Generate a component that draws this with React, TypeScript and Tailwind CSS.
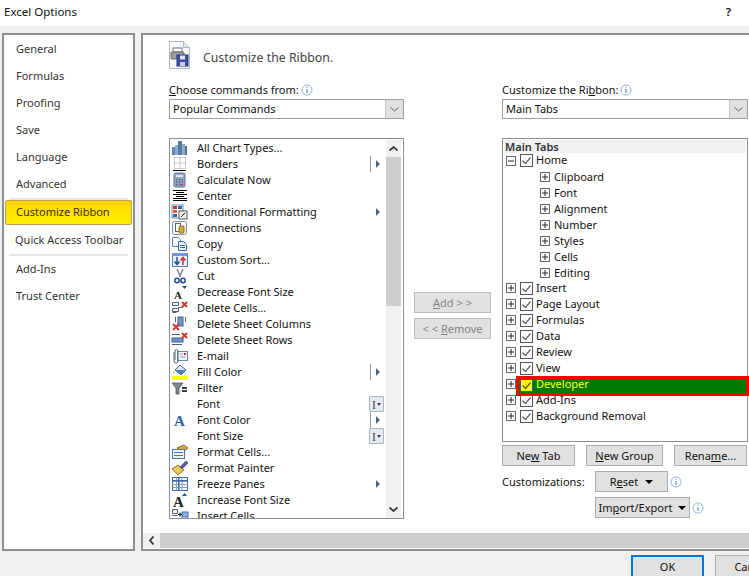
import type { ReactNode } from "react";

/* ── Small glyphs ─────────────────────────────────────────── */

function Info() {
  return (
    <svg width="12" height="12" viewBox="0 0 12 12" className="shrink-0">
      <circle cx="6" cy="6" r="5" fill="#fff" stroke="#8fb4de" />
      <rect x="5.5" y="2.8" width="1" height="1" fill="#3f7fc4" />
      <rect x="5.5" y="5" width="1" height="4" fill="#3f7fc4" />
    </svg>
  );
}

function Chevron({ bold }: { bold?: boolean }) {
  return (
    <svg width="9" height="5" viewBox="0 0 9 5">
      <path d="M.5.5l4 3.5 4-3.5" fill="none" stroke={bold ? "#333" : "#555"} strokeWidth={bold ? 1.7 : 1} />
    </svg>
  );
}

function Caret() {
  return <span className="border-x-[4px] border-t-[4px] border-x-transparent border-t-black" />;
}

function Toggle({ open }: { open?: boolean }) {
  return (
    <svg width="10" height="10" viewBox="0 0 10 10" className="shrink-0">
      <rect x=".5" y=".5" width="9" height="9" fill="#fff" stroke="#666" />
      <path d={open ? "M2 5h6" : "M2 5h6M5 2v6"} stroke="#222" />
    </svg>
  );
}

function Check({ yellow }: { yellow?: boolean }) {
  return (
    <svg width="13" height="13" viewBox="0 0 13 13" className="shrink-0">
      <rect x=".5" y=".5" width="12" height="12" fill={yellow ? "#ffff00" : "#fff"} stroke={yellow ? "#1f5fb0" : "#555"} />
      <path d="M2.5 6.5l3 3 5-6" fill="none" stroke={yellow ? "#555500" : "#666"} strokeWidth="1.2" />
    </svg>
  );
}

/* ── Command icons ────────────────────────────────────────── */

const REDX = "M10 1l5 5M15 1l-5 5";

const ICONS: Record<string, ReactNode> = {
  chart: (
    <>
      <rect x="1" y="7" width="3" height="8" fill="#5f84ad" />
      <rect x="4" y="5" width="4" height="10" fill="#8fabcb" />
      <rect x="7" y="1" width="4" height="14" fill="#55789f" />
      <rect x="11" y="4" width="3" height="11" fill="#8fabcb" />
      <rect x="14" y="6" width="2" height="9" fill="#4f7196" />
    </>
  ),
  borders: (
    <>
      <path d="M3.500 1.500h11v11h-11zM9 1.500v11M3.500 7h11" fill="none" stroke="#999" strokeDasharray="1 1" />
      <rect x="2" y="14" width="13" height="1" fill="#000" />
    </>
  ),
  calc: (
    <>
      <rect x="3" y="1" width="11" height="14" rx="1.500" fill="#8ea6c9" stroke="#64799b" />
      <rect x="5" y="3" width="7" height="2" fill="#dfe8f4" />
      <path d="M5 7.500h7M5 10h7M5 12.500h7" stroke="#5a5f7d" strokeDasharray="1.500 1.500" strokeWidth="1.500" />
      <rect x="10" y="12" width="2" height="1.500" fill="#c53b3b" />
    </>
  ),
  center: <path d="M2 2.500h14M5 4.500h8M2 6.500h14M5 8.500h8M2 10.500h14M2 12.500h14" stroke="#000" />,
  cond: (
    <>
      <rect x="1" y="1" width="11" height="13" fill="#fff" stroke="#6f8fb5" />
      <rect x="2" y="2" width="4" height="3" fill="#c9372c" />
      <rect x="7" y="2" width="4" height="3" fill="#3c66a5" />
      <rect x="2" y="6" width="4" height="3" fill="#d9603f" />
      <rect x="2" y="10" width="4" height="3" fill="#3c66a5" />
      <rect x="8" y="7" width="8" height="8" fill="#edf0f4" stroke="#555" />
      <path d="M10 13l4-4" stroke="#222" />
    </>
  ),
  conn: (
    <>
      <rect x="1.500" y="1.500" width="14" height="13" rx="2" fill="#f3f5f8" stroke="#7d8ea3" />
      <rect x="4.500" y="3.500" width="5" height="8" fill="#fff" stroke="#567" />
      <rect x="8" y="6" width="5" height="7" rx="1" fill="#d6a93c" stroke="#8f6d1a" />
    </>
  ),
  copy: (
    <>
      <path d="M1.500 1.500h6l2 2v7h-8z" fill="#fff" stroke="#5d82b8" />
      <path d="M7.500 5.500h5l3 3v6h-8z" fill="#e9f0f9" stroke="#3e69a8" />
      <path d="M9 9.500h5M9 11.500h5" stroke="#3e69a8" />
    </>
  ),
  sort: (
    <>
      <rect x="1.500" y="1.500" width="15" height="13" fill="#e8f0fa" stroke="#4e7fbd" />
      <rect x="1" y="1" width="16" height="3" fill="#6d9ad1" />
      <path d="M6 5v7M3.500 9.500L6 12.500l2.500-3" fill="none" stroke="#1f4f9c" strokeWidth="1.500" />
      <path d="M12 13V6M9.500 8.500L12 5.500l2.500 3" fill="none" stroke="#c8352a" strokeWidth="1.500" />
    </>
  ),
  cut: (
    <>
      <path d="M6 1l3.500 8M12 1L8.500 9" stroke="#7d8794" strokeWidth="1.500" />
      <circle cx="6" cy="12.500" r="2.200" fill="#fff" stroke="#22439c" strokeWidth="1.500" />
      <circle cx="12" cy="12.500" r="2.200" fill="#fff" stroke="#22439c" strokeWidth="1.500" />
    </>
  ),
  dec: (
    <>
      <text x="3" y="15" fontFamily="Liberation Serif, serif" fontWeight="700" fontSize="11" fill="#222">A</text>
      <path d="M11 2h5l-2.500 3z" fill="#1f4f9c" />
    </>
  ),
  delCells: (
    <>
      <path d="M1.500 2.500h6v3h-6zM1.500 8.500h6v3h-6zM1.500 12.500h4" fill="#fff" stroke="#4b5f7c" />
      <path d="M7 7.500h5" stroke="#4b5f7c" />
      <path d={REDX} transform="translate(1 1)" stroke="#d8342a" strokeWidth="2" />
    </>
  ),
  delCols: (
    <>
      <path d="M4.500 1v5M14.500 1v5" stroke="#4b5f7c" />
      <rect x="7" y="1" width="5" height="9" fill="#6f96c7" stroke="#3e5f8e" />
      <path d="M2 8l6 6M8 8l-6 6" stroke="#d8342a" strokeWidth="2" />
    </>
  ),
  delRows: (
    <>
      <path d="M1 2.500h8M1 12.500h10" stroke="#4b5f7c" />
      <rect x="1" y="6" width="11" height="4" fill="#6f96c7" stroke="#3e5f8e" />
      <path d={REDX} transform="translate(1 0)" stroke="#d8342a" strokeWidth="2" />
    </>
  ),
  mail: (
    <>
      <rect x="6.500" y="3.500" width="10" height="9" fill="#f4f7fb" stroke="#6f86a5" />
      <path d="M9 6h3M9 9h5" stroke="#8596ad" />
      <rect x="13" y="5" width="2" height="2" fill="#c9372c" />
      <path d="M3 4v9a2 2 0 004 0V3a1.500 1.500 0 00-3 0v9" fill="none" stroke="#57687d" />
    </>
  ),
  fill: (
    <>
      <path d="M9 1l6 5-5 5-6-5z" fill="#dce6f2" stroke="#3f5f8c" />
      <path d="M4 6h10l-4 5z" fill="#4f7fc0" />
      <path d="M3 6.500q-1.500 3 0 3t0-3" fill="#f0c010" />
      <rect x="1" y="12" width="16" height="4" fill="#ffff00" />
    </>
  ),
  filter: (
    <>
      <path d="M1 3h11L8 8v6H5V8z" fill="#7b8794" stroke="#4a5561" strokeWidth=".8" />
      <path d="M11 8h5M11 11h5" stroke="#000" strokeWidth="1.500" />
    </>
  ),
  fontColor: (
    <text x="3" y="14" fontFamily="Liberation Serif, serif" fontWeight="700" fontSize="15" fill="#2d5fa8">A</text>
  ),
  formatCells: (
    <>
      <path d="M6 4l7-3 4 3-5 4z" fill="#d1a94a" stroke="#8b6a1e" />
      <rect x="1.500" y="5.500" width="12" height="9" fill="#eef3f9" stroke="#4c74a8" />
      <path d="M3 8.500h9M3 11.500h9" stroke="#4c74a8" />
    </>
  ),
  painter: (
    <>
      <path d="M1 9l6-4 6 5-6 5z" fill="#ecc85a" stroke="#97772a" />
      <path d="M9 7l6-6 2 2-6 6z" fill="#5b56a8" stroke="#3e3a82" strokeWidth=".6" />
    </>
  ),
  freeze: (
    <>
      <rect x="1.500" y="1.500" width="15" height="13" fill="#fff" stroke="#3e69a8" />
      <path d="M1.500 5h15M1.500 8.500h15M1.500 11.500h15M5.500 1.500v13M11 1.500v13" stroke="#7fa0cb" />
      <rect x="1" y="4" width="16" height="1.500" fill="#3e69a8" />
      <rect x="7" y="1" width="1.500" height="14" fill="#3e69a8" />
    </>
  ),
  inc: (
    <>
      <text x="2" y="15" fontFamily="Liberation Serif, serif" fontWeight="700" fontSize="15" fill="#222">A</text>
      <path d="M11 4h5l-2.500-3z" fill="#1f4f9c" />
    </>
  ),
  insert: (
    <>
      <path d="M1.500 1.500h5v4h-5zM1.500 7.500h5" fill="#fff" stroke="#4b5f7c" />
      <path d="M7 6.500h4M9 4.500v4" stroke="#000" />
      <rect x="11" y="4" width="6" height="5" fill="#8fb4e0" stroke="#3e69a8" />
    </>
  ),
};

/* ── Data ─────────────────────────────────────────────────── */

type Side = "arrow" | "split" | "input";

const COMMANDS: { icon?: string; label: string; side?: Side }[] = [
  { icon: "chart", label: "All Chart Types..." },
  { icon: "borders", label: "Borders", side: "split" },
  { icon: "calc", label: "Calculate Now" },
  { icon: "center", label: "Center" },
  { icon: "cond", label: "Conditional Formatting", side: "arrow" },
  { icon: "conn", label: "Connections" },
  { icon: "copy", label: "Copy" },
  { icon: "sort", label: "Custom Sort..." },
  { icon: "cut", label: "Cut" },
  { icon: "dec", label: "Decrease Font Size" },
  { icon: "delCells", label: "Delete Cells..." },
  { icon: "delCols", label: "Delete Sheet Columns" },
  { icon: "delRows", label: "Delete Sheet Rows" },
  { icon: "mail", label: "E-mail" },
  { icon: "fill", label: "Fill Color", side: "split" },
  { icon: "filter", label: "Filter" },
  { label: "Font", side: "input" },
  { icon: "fontColor", label: "Font Color", side: "split" },
  { label: "Font Size", side: "input" },
  { icon: "formatCells", label: "Format Cells..." },
  { icon: "painter", label: "Format Painter" },
  { icon: "freeze", label: "Freeze Panes", side: "arrow" },
  { icon: "inc", label: "Increase Font Size" },
  { icon: "insert", label: "Insert Cells" },
];

const GROUPS = ["Clipboard", "Font", "Alignment", "Number", "Styles", "Cells", "Editing"];
const TABS_A = ["Insert", "Page Layout", "Formulas", "Data", "Review", "View"];
const TABS_B = ["Add-Ins", "Background Removal"];

/* ── Pieces ───────────────────────────────────────────────── */

function NavItem({ label, className = "" }: { label: string; className?: string }) {
  return <div className={`flex items-center ${className}`}>{label}</div>;
}

function SideMark({ side }: { side?: Side }) {
  if (!side) return null;
  if (side === "input") {
    return (
      <span className="ml-auto mr-[2px] flex h-[16px] w-[15px] items-center justify-center gap-[1px] rounded-[1px] border border-[#a9b6c6] bg-[#e6ebf1] text-[#555]">
        <span className="font-['Liberation_Serif',serif] text-[13px] leading-none">I</span>
        <span className="border-x-[2.5px] border-t-[3px] border-x-transparent border-t-[#444]" />
      </span>
    );
  }
  return (
    <span className="ml-auto flex h-[16px] w-[18px] items-center">
      <span className={`ml-[2px] h-[16px] w-px ${side === "split" ? "bg-[#9a9a9a]" : ""}`} />
      <span className="ml-[5px] border-y-[4px] border-l-[4px] border-y-transparent border-l-[#4d6488]" />
    </span>
  );
}

function Combo({ label }: { label: string }) {
  return (
    <div className="flex h-[20px] items-stretch border border-[#a0a0a0] bg-white pl-[3px]">
      <span className="flex-1 leading-[18px]">{label}</span>
      <span className="flex w-[18px] items-center justify-center border-l border-[#c4c4c4] bg-[#e1e1e1]">
        <Chevron />
      </span>
    </div>
  );
}

function Btn({ children, className = "" }: { children: ReactNode; className?: string }) {
  return (
    <div className={`flex h-[21px] items-center justify-center border border-[#adadad] bg-[#e1e1e1] pt-px ${className}`}>
      {children}
    </div>
  );
}

function TreeRow({ label, className = "" }: { label: string; className?: string }) {
  return (
    <div className={`flex h-[16px] items-center pl-[2px] ${className}`}>
      <Toggle />
      <span className="ml-[4px]"><Check /></span>
      <span className="ml-[3px]">{label}</span>
    </div>
  );
}

/* ── Dialog ───────────────────────────────────────────────── */

export default function App() {
  return (
    <div className="flex h-[576px] w-[749px] flex-col overflow-hidden bg-[#f0f0f0] font-['Noto_Sans',sans-serif] text-[11px] text-[#111]">
      {/* title bar */}
      <div className="flex h-[26px] shrink-0 items-start justify-between bg-white pl-[4px] pr-[18px] pt-[3px] text-[11.5px]">
        <span>Excel Options</span>
        <span className="font-semibold">?</span>
      </div>

      <div className="mt-[7px] flex h-[518px] shrink-0 gap-[6px] pl-[2px]">
        {/* category list */}
        <nav className="w-[133px] shrink-0 border-2 border-[#8b9096] bg-white pt-px text-[#333]">
          {["General", "Formulas", "Proofing", "Save", "Language", "Advanced"].map((n) => (
            <NavItem key={n} label={n} className="h-[27px] pl-[12px]" />
          ))}
          <div className="mx-[5px] h-[2px] bg-[#e6e6e6]" />
          <div className="mx-[1px] flex h-[25px] items-center rounded-[2px] border border-[#c2a14a] bg-gradient-to-b from-[#ffd400] to-[#fff000] pl-[10px] text-[#3b3000]">
            Customize Ribbon
          </div>
          <NavItem label="Quick Access Toolbar" className="mt-[2px] h-[27px] pl-[11px]" />
          <div className="mx-[5px] h-[2px] bg-[#e6e6e6]" />
          <NavItem label="Add-Ins" className="h-[26px] pl-[12px]" />
          <NavItem label="Trust Center" className="h-[28px] pl-[12px]" />
        </nav>

        {/* customize panel */}
        <main className="flex min-w-0 flex-1 flex-col border-y-2 border-l-2 border-[#8b9096] bg-white">
          <div className="mt-[5px] flex h-[30px] shrink-0 items-center pl-[25px]">
            <svg width="23" height="30" viewBox="0 0 23 30" className="shrink-0">
              <path d="M1.500 1.500h14l6 6v21h-20z" fill="#f5f8fb" stroke="#a9bacb" />
              <path d="M15.500 1.500v6h6" fill="#dfe7ef" stroke="#a9bacb" />
              <rect x="5" y="8" width="9" height="4" fill="#fff" stroke="#777" />
              <rect x="3" y="12" width="13" height="7" rx="1" fill="#9a9fa6" stroke="#666" />
              <rect x="9" y="15" width="11" height="11" fill="#3f4f9e" stroke="#2b3675" />
              <rect x="12" y="15.500" width="5" height="4" fill="#dfe4f5" />
              <rect x="12" y="22" width="5" height="4" fill="#c8cfe4" />
            </svg>
            <span className="ml-[12px] mt-[6px] text-[12.3px] text-[#444]">Customize the Ribbon.</span>
          </div>

          <div className="mt-[12px] flex pl-[26px]">
            {/* left column */}
            <div className="w-[235px] shrink-0">
              <div className="mb-px flex h-[16px] items-center gap-[2px]">
                <span><u>C</u>hoose commands from:</span>
                <Info />
              </div>
              <Combo label="Popular Commands" />
              <div className="mt-[19px] flex h-[381px] overflow-hidden border border-[#8b9096] pl-px pt-px">
                <div className="min-w-0 flex-1">
                  {COMMANDS.map((c) => (
                    <div key={c.label} className="flex h-[16px] items-center">
                      <svg width="18" height="16" viewBox="0 0 18 16" className="shrink-0">
                        {c.icon ? ICONS[c.icon] : null}
                      </svg>
                      <span className="ml-[8px] whitespace-nowrap">{c.label}</span>
                      <SideMark side={c.side} />
                    </div>
                  ))}
                </div>
                <div className="mr-[2px] flex w-[15px] shrink-0 flex-col items-center bg-[#f0f0f0]">
                  <div className="flex h-[17px] items-center">
                    <span className="flex rotate-180"><Chevron bold /></span>
                  </div>
                  <div className="h-[149px] w-full bg-[#cdcdcd]" />
                  <div className="mt-auto flex h-[17px] items-center">
                    <Chevron bold />
                  </div>
                </div>
              </div>
            </div>

            {/* add / remove */}
            <div className="ml-[10px] w-[77px] shrink-0 pt-[210px] text-[#858585]">
              <Btn className="border-[#bdbdbd] bg-[#cccccc]"><span><u>A</u>dd &gt; &gt;</span></Btn>
              <Btn className="mt-[5px] border-[#bdbdbd] bg-[#cccccc]"><span>&lt; &lt; <u>R</u>emove</span></Btn>
            </div>

            {/* right column */}
            <div className="ml-[11px] w-[246px] shrink-0">
              <div className="mb-px flex h-[16px] items-center gap-[2px]">
                <span>Customize the Ri<u>b</u>bon:</span>
                <Info />
              </div>
              <Combo label="Main Tabs" />
              <div className="mt-[19px] h-[304px] border border-[#8b9096] pl-px pt-px">
                <div className="mr-px h-[13px] bg-[#f0f0f0] pl-px font-semibold leading-[14px] text-[#333]">Main Tabs</div>
                <div className="flex h-[15px] items-center pl-[2px]">
                  <Toggle open />
                  <span className="ml-[4px]"><Check /></span>
                  <span className="ml-[3px]">Home</span>
                </div>
                <div className="mt-px">
                  {GROUPS.map((g) => (
                    <div key={g} className="flex h-[16px] items-center pl-[36px]">
                      <Toggle />
                      <span className="ml-[4px]">{g}</span>
                    </div>
                  ))}
                </div>
                <div className="mt-[-1px]">
                  {TABS_A.map((t) => <TreeRow key={t} label={t} />)}
                  <div className="relative">
                    <TreeRow label="Developer" />
                    <div className="absolute left-[12px] right-[-2px] top-0 z-10 flex h-[20px] items-start border-[3px] border-[#ff0000] bg-[#007a00] pl-[1px] text-[#ffff00]">
                      <Check yellow />
                      <span className="ml-[3px] leading-[10px]">Developer</span>
                    </div>
                  </div>
                  {TABS_B.map((t) => <TreeRow key={t} label={t} />)}
                </div>
              </div>

              <div className="mt-[3px] flex">
                <Btn className="w-[73px]"><span>Ne<u>w</u> Tab</span></Btn>
                <Btn className="ml-[11px] w-[77px]"><span><u>N</u>ew Group</span></Btn>
                <Btn className="ml-[11px] w-[73px]"><span>Rena<u>m</u>e...</span></Btn>
              </div>
              <div className="mt-[5px] flex items-center">
                <span className="mt-[2px] w-[93px]">Customizations:</span>
                <Btn className="w-[73px] gap-[7px]"><span>R<u>e</u>set</span><Caret /></Btn>
                <span className="ml-[2px]"><Info /></span>
              </div>
              <div className="mt-[5px] flex items-center pl-[93px]">
                <Btn className="w-[95px] gap-[6px]"><span>Im<u>p</u>ort/Export</span><Caret /></Btn>
                <span className="ml-[2px]"><Info /></span>
              </div>
            </div>
          </div>

          {/* horizontal scrollbar */}
          <div className="mb-px mt-auto flex h-[15px] shrink-0 bg-[#f0f0f0]">
            <div className="flex w-[17px] items-center justify-center">
              <span className="flex rotate-90"><Chevron bold /></span>
            </div>
            <div className="flex-1 bg-[#cdcdcd]" />
          </div>
        </main>
      </div>

      {/* footer */}
      <div className="mt-[4px] flex pl-[631px]">
        <div className="flex h-[24px] w-[73px] shrink-0 items-center justify-center border-2 border-[#0078d7] bg-[#e1e1e1]">OK</div>
        <div className="ml-[11px] flex h-[24px] w-[73px] shrink-0 items-center justify-center border border-[#adadad] bg-[#e1e1e1]">Cancel</div>
      </div>
    </div>
  );
}
